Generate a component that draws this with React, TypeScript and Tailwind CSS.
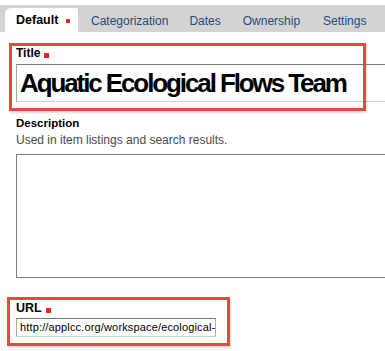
import React from "react";

export default function App() {
  return (
    <div className="relative w-[385px] h-[351px] overflow-hidden bg-white font-['Liberation_Sans',Arial,sans-serif] text-black">
      {/* Tabs */}
      <div className="mt-[5px] h-[27px] bg-[#d3d3d3] flex items-end">
        <div className="ml-[5px] h-[24px] w-[73px] bg-white rounded-tl-[6px] rounded-tr-[2px] flex items-center pl-[11px] gap-[8px] text-[12.5px] font-bold pt-[1px]">
          <span>Default</span>
          <span className="inline-block w-[4px] h-[4px] bg-[#e8281f] mt-[1px]" />
        </div>
        <div className="h-[24px] flex items-center text-[12px] text-[#1f4a7d] pt-[1px]">
          <span className="ml-[13px]">Categorization</span>
          <span className="ml-[21px]">Dates</span>
          <span className="ml-[22px]">Ownership</span>
          <span className="ml-[23px]">Settings</span>
        </div>
      </div>

      {/* Form */}
      <div className="pl-[16px] flex flex-col">
        <div className="mt-[14px] h-[14px] leading-[14px] text-[12px] font-bold flex items-end gap-[4px]">
          <span className="leading-[14px]">Title</span>
          <span className="inline-block w-[5px] h-[5px] bg-[#e8281f] mb-[2px]" />
        </div>
        <div className="mt-[4px] h-[38px] w-[400px] border border-t-[#7a7a7a] border-l-[#a8a8a8] border-r-[#a8a8a8] border-b-[#d0d0d0] flex items-center pl-[3px]">
          <span className="text-[26px] font-bold tracking-[-2.1px] leading-none whitespace-nowrap">
            Aquatic Ecological Flows Team
          </span>
        </div>

        <div className="mt-[14px] text-[11.5px] leading-[14px] font-bold">Description</div>
        <div className="mt-[3px] text-[12px] leading-[14px] text-[#4a4a4a]">
          Used in item listings and search results.
        </div>
        <div className="mt-[7px] h-[124px] w-[400px] border border-[#7d7d7d]" />

        <div className="mt-[23px] h-[14px] text-[12.5px] leading-[14px] font-bold flex items-end gap-[4px]">
          <span>URL</span>
          <span className="inline-block w-[5px] h-[5px] bg-[#e8281f] mb-[2px]" />
        </div>
        <div className="mt-[3px] h-[19px] w-[200px] border border-t-[#7a7a7a] border-l-[#a8a8a8] border-r-[#a8a8a8] border-b-[#d0d0d0] flex items-center pl-[3px] overflow-hidden">
          <span className="text-[11px] tracking-[0.15px] leading-none whitespace-nowrap">
            http://applcc.org/workspace/ecological-flows-team
          </span>
        </div>
      </div>

      {/* Annotation boxes */}
      <div className="absolute left-[9px] top-[43px] w-[357px] h-[68px] border-[3px] border-[#e04a3f] shadow-[1px_2px_2px_rgba(0,0,0,0.15)]" />
      <div className="absolute left-[7px] top-[297px] w-[223px] h-[49px] border-[3px] border-[#e04a3f] shadow-[1px_2px_2px_rgba(0,0,0,0.15)]" />
    </div>
  );
}
